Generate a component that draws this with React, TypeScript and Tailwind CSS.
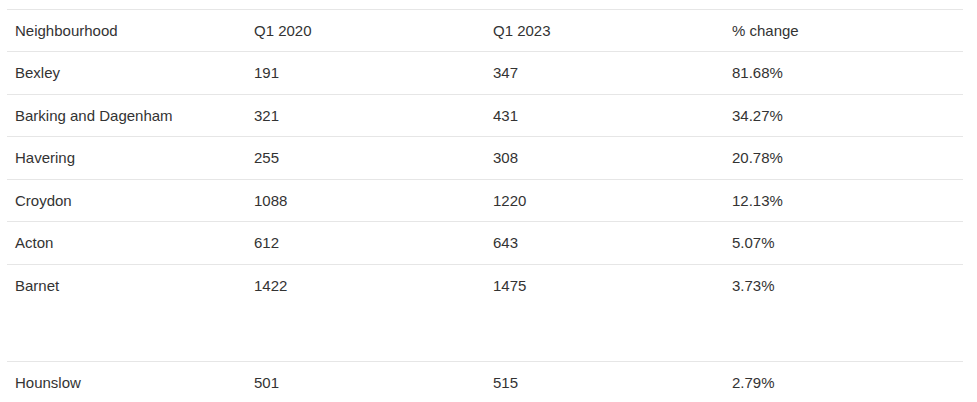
const rows = [
  { name: 'Bexley', q1: '191', q2: '347', change: '81.68%' },
  { name: 'Barking and Dagenham', q1: '321', q2: '431', change: '34.27%' },
  { name: 'Havering', q1: '255', q2: '308', change: '20.78%' },
  { name: 'Croydon', q1: '1088', q2: '1220', change: '12.13%' },
  { name: 'Acton', q1: '612', q2: '643', change: '5.07%' },
  { name: 'Barnet', q1: '1422', q2: '1475', change: '3.73%', tall: true },
  { name: 'Hounslow', q1: '501', q2: '515', change: '2.79%' },
];

export default function App() {
  return (
    <div className="bg-white w-[977px] h-[402px] overflow-hidden pt-[9px] pl-[7px] font-['Liberation_Sans',Arial,sans-serif] text-[15px] text-[#333]">
      <table className="w-[956px] table-fixed border-collapse">
        <thead>
          <tr className="border-t border-[#e6e6e6]">
            <th className="h-[42px] px-2 pt-[1px] text-left font-normal align-middle">Neighbourhood</th>
            <th className="px-2 pt-[1px] text-left font-normal align-middle">Q1 2020</th>
            <th className="px-2 pt-[1px] text-left font-normal align-middle">Q1 2023</th>
            <th className="px-2 pt-[1px] text-left font-normal align-middle">% change</th>
          </tr>
        </thead>
        <tbody>
          {rows.map((r) => (
            <tr key={r.name} className="border-t border-[#e6e6e6]">
              <td className={`${r.tall ? 'h-[97px]' : 'h-[42.5px]'} px-2 pt-[12px] align-top leading-[18px]`}>{r.name}</td>
              <td className="px-2 pt-[12px] align-top leading-[18px]">{r.q1}</td>
              <td className="px-2 pt-[12px] align-top leading-[18px]">{r.q2}</td>
              <td className="px-2 pt-[12px] align-top leading-[18px]">{r.change}</td>
            </tr>
          ))}
        </tbody>
      </table>
    </div>
  );
}
